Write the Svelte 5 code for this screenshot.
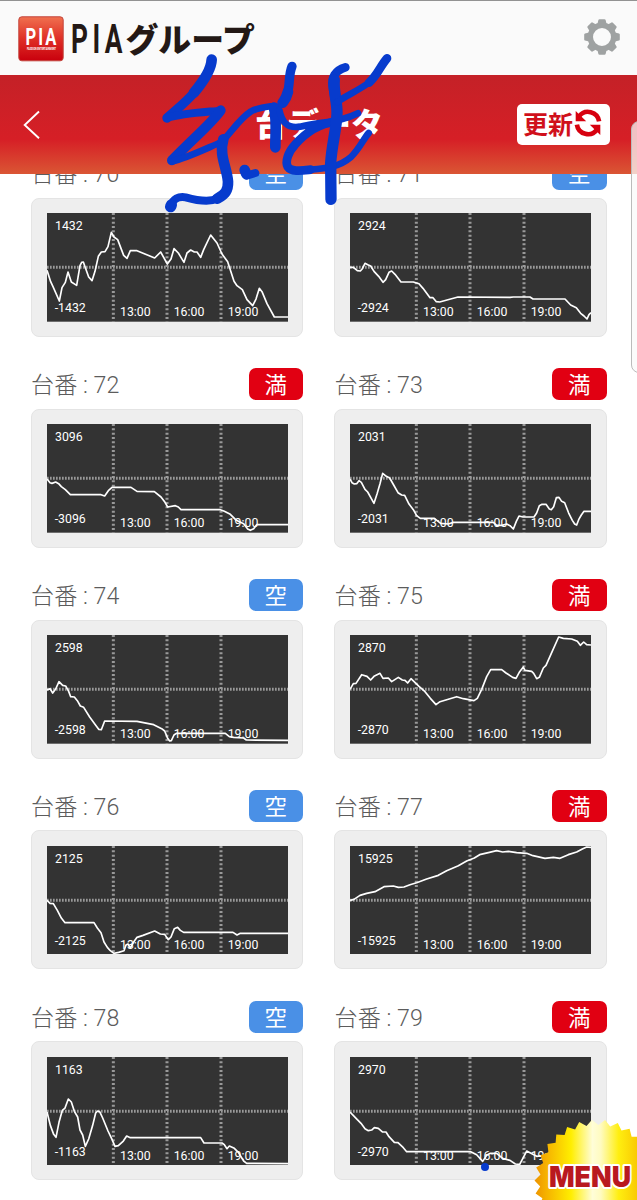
<script lang="ts">
  interface Machine {
    id: number;
    full: boolean;
    max: number;
    line: string;
  }

  // line points live in the 723 x 326 chart space
  const machines: Machine[] = [
    {
      id: 70,
      full: false,
      max: 1432,
      line: "0,172 11,206 18,221 37,264 45,224 55,208 63,177 73,207 89,217 99,158 104,148 109,147 125,192 135,203 144,175 154,130 163,117 174,116 183,101 193,58 201,72 212,80 230,127 240,136 250,113 270,113 323,135 341,117 361,153 372,138 381,107 394,120 411,148 420,120 431,111 442,117 450,117 461,133 470,110 491,66 510,90 525,123 542,146 561,205 570,218 586,230 600,260 617,278 627,258 637,226 645,236 660,272 682,312 723,312",
    },
    {
      id: 71,
      full: false,
      max: 2924,
      line: "0,163 10,163 22,173 31,174 37,167 45,151 55,156 62,159 72,175 86,190 99,208 107,200 117,178 125,174 135,184 153,207 190,207 207,212 219,226 240,254 249,254 259,266 269,267 324,252 480,253 490,252 540,252 549,258 645,258 662,276 679,284 692,301 702,309 711,318 717,305 723,299",
    },
    {
      id: 72,
      full: true,
      max: 3096,
      line: "0,165 9,176 15,178 26,174 35,179 43,188 55,197 70,212 162,212 173,216 184,200 195,190 252,190 270,202 322,203 342,219 354,235 362,249 385,245 394,249 402,257 520,257 532,262 550,271 568,289 590,299 602,315 610,319 620,314 629,302 723,302",
    },
    {
      id: 73,
      full: true,
      max: 2031,
      line: "0,165 6,176 13,180 20,179 27,170 34,175 45,196 53,204 72,238 81,210 90,179 98,148 109,157 119,162 131,183 144,206 155,213 164,214 177,240 190,257 200,275 211,283 253,283 272,298 295,300 310,295 430,295 440,304 456,304 470,300 480,305 490,315 499,292 507,276 519,279 552,279 560,267 568,245 576,241 588,241 598,255 604,257 611,248 619,221 627,220 635,232 644,236 656,267 667,289 674,300 680,303 686,287 694,273 702,262 723,262",
    },
    {
      id: 74,
      full: false,
      max: 2598,
      line: "0,165 9,161 17,174 26,162 36,140 47,151 56,153 65,169 71,185 82,186 91,197 100,213 110,217 128,246 145,269 155,283 163,284 173,258 270,259 320,269 344,281 353,288 362,310 368,318 373,317 381,300 388,295 535,295 547,305 560,307 590,309 598,315 723,316",
    },
    {
      id: 75,
      full: true,
      max: 2870,
      line: "0,163 10,146 18,145 35,119 51,124 62,135 72,124 90,115 99,130 115,129 125,140 145,127 157,135 165,136 173,144 183,131 207,154 225,170 241,190 258,209 270,200 320,185 340,191 372,197 382,190 395,163 410,125 422,104 455,104 468,114 488,127 498,130 509,110 520,96 525,106 545,109 551,115 560,131 568,127 580,99 588,91 605,53 626,6 640,10 665,12 682,19 691,31 701,21 710,29 723,30",
    },
    {
      id: 76,
      full: false,
      max: 2125,
      line: "0,163 9,172 19,173 31,193 43,216 54,230 141,230 151,246 162,260 171,288 181,304 190,314 201,322 215,319 231,314 237,297 243,294 250,306 260,288 270,274 288,268 323,255 340,264 353,265 364,281 372,273 382,248 392,244 400,253 410,259 558,259 570,267 580,262 723,262",
    },
    {
      id: 77,
      full: true,
      max: 15925,
      line: "0,163 12,160 30,148 50,142 75,137 102,122 130,120 145,124 162,123 180,116 200,110 230,99 265,88 290,74 325,59 350,45 373,36 389,26 415,20 440,14 458,18 475,16 500,20 530,22 549,29 585,37 610,34 630,37 655,26 680,18 697,9 710,3 723,4",
    },
    {
      id: 78,
      full: false,
      max: 1163,
      line: "0,165 10,205 20,232 27,241 36,196 46,160 54,153 64,126 73,135 82,163 92,180 99,219 107,234 115,268 125,246 137,205 146,168 152,162 158,164 167,183 183,222 194,245 204,268 214,266 229,252 239,237 250,242 461,242 471,258 525,258 532,263 540,275 547,267 562,274 574,286 590,312 599,319 723,320",
    },
    {
      id: 79,
      full: true,
      max: 2970,
      line: "0,165 22,188 33,199 45,215 55,221 65,219 73,212 85,214 98,225 108,225 117,239 133,256 144,257 160,272 170,284 362,284 380,293 398,313 410,295 421,289 440,289 458,304 480,310 496,321 509,322 519,303 530,282 560,298 590,294 620,310 723,310",
    },
  ];

  function burst(cx: number, cy: number, teeth: number): string {
    const pts: string[] = [];
    for (let i = 0; i < teeth * 2; i++) {
      const r = i % 2 ? 57 : 62.5;
      const a = (i * Math.PI) / teeth - Math.PI / 2 - 0.08;
      pts.push(`${(cx + r * Math.cos(a)).toFixed(1)},${(cy + r * Math.sin(a)).toFixed(1)}`);
    }
    return pts.join(" ");
  }

  const gearTeeth = [0, 45, 90, 135, 180, 225, 270, 315];
  const hours = [
    { x: 199, label: "13:00" },
    { x: 360, label: "16:00" },
    { x: 522, label: "19:00" },
  ];
</script>

<div class="screen">
  <header class="brand">
    <svg class="logo" viewBox="0 0 240 58" width="240" height="58">
      <defs>
        <linearGradient id="tile" x1="0" y1="0" x2="0" y2="1">
          <stop offset="0" stop-color="#f0704f" />
          <stop offset="0.5" stop-color="#df2f26" />
          <stop offset="1" stop-color="#c9000d" />
        </linearGradient>
      </defs>
      <rect x="0.8" y="0.8" width="44.4" height="44" rx="3" fill="url(#tile)" stroke="#c2453c" />
      <g class="pia" fill="#fff">
        <text x="7.5" y="28.5" font-size="24" letter-spacing="3" textLength="33" lengthAdjust="spacingAndGlyphs">PIA</text>
        <text x="9" y="33.8" font-size="3.4" textLength="29" lengthAdjust="spacingAndGlyphs">PASSION ENTERTAINMENT</text>
      </g>
      <text class="pia" x="53" y="37" font-size="41" letter-spacing="7" textLength="56" lengthAdjust="spacingAndGlyphs" fill="#231815">PIA</text>
      <text class="group" x="107.5" y="35.5" font-size="33" textLength="129.5" lengthAdjust="spacingAndGlyphs">グループ</text>
    </svg>
    <svg class="gear" viewBox="-18 -18 36 36" width="36" height="36">
      <circle r="11.7" fill="none" stroke="#9fa2a2" stroke-width="5.4" />
      {#each gearTeeth as a}
        <path d="M-4.6 -13 L-3.6 -17 Q-3.4 -17.8 -2.5 -17.8 H2.5 Q3.4 -17.8 3.6 -17 L4.6 -13 Z" fill="#9fa2a2" transform="rotate({a})" />
      {/each}
    </svg>
  </header>

  <nav class="titlebar">
    <svg class="back" viewBox="0 0 18 30" width="18" height="30">
      <path d="M16 1.5 L1.7 15 L16 28.3" fill="none" stroke="#fff" stroke-width="1.9" />
    </svg>
    <h1>台データ</h1>
    <button class="reload">
      <span>更新</span>
      <svg viewBox="-14 -14 28 28" width="28" height="28">
        <g fill="none" stroke="#d7000f" stroke-width="4.6">
          <path d="M-9 -6.6 A11.2 11.2 0 0 1 11.1 -1.6" />
          <path d="M9 6.6 A11.2 11.2 0 0 1 -11.1 1.6" />
        </g>
        <path d="M-12.3 -12 V-1.8 H-1.8 Z" fill="#d7000f" />
        <path d="M12.3 12 V1.8 H1.8 Z" fill="#d7000f" />
      </svg>
    </button>
  </nav>

  <main>
    <div class="grid">
      {#each machines as m}
        <section>
          <div class="head">
            <span class="number">台番 : {m.id}</span>
            <span class="state" class:full={m.full}>{m.full ? "満" : "空"}</span>
          </div>
          <div class="card">
            <svg class="chart" viewBox="0 0 723 326" preserveAspectRatio="none">
              <rect width="723" height="326" fill="#333" />
              <g stroke="#999" stroke-width="9" stroke-dasharray="6 7">
                <line x1="0" y1="163" x2="723" y2="163" stroke-dasharray="5 4" />
                {#each hours as h}
                  <line x1={h.x} y1="0" x2={h.x} y2="326" />
                {/each}
              </g>
              <text x="24" y="50">{m.max}</text>
              <text x="23" y="296">-{m.max}</text>
              {#each hours as h}
                <text x={h.x + 20} y="308">{h.label}</text>
              {/each}
              <polyline points={m.line} fill="none" stroke="#fff" stroke-width="5" stroke-linejoin="round" />
            </svg>
          </div>
        </section>
      {/each}
    </div>
  </main>

  <div class="edge-panel"></div>

  <svg class="menu" viewBox="0 0 107 84" width="107" height="84">
    <defs>
      <linearGradient id="gold" gradientUnits="userSpaceOnUse" x1="3" y1="60" x2="122" y2="60">
        <stop offset="0" stop-color="#ec8f00" />
        <stop offset="0.12" stop-color="#f6b400" />
        <stop offset="0.32" stop-color="#ffee00" />
        <stop offset="0.5" stop-color="#fffdd8" />
        <stop offset="0.57" stop-color="#fffbc0" />
        <stop offset="0.72" stop-color="#ffee10" />
        <stop offset="0.9" stop-color="#f8c400" />
      </linearGradient>
    </defs>
    <polygon points={burst(67, 66, 30)} fill="url(#gold)" />
    <text x="19" y="71.3" textLength="82" lengthAdjust="spacingAndGlyphs">MENU</text>
  </svg>

  <!-- handwritten marks over the title -->
  <svg class="ink" viewBox="0 0 750 495" width="250" height="165">
    <g fill="none" stroke="#073bcd" stroke-linecap="round" stroke-linejoin="round">
      <path stroke-width="32" d="M185 29 C184 60 157 98 132 128" />
      <path stroke-width="28" d="M132 128 C108 156 83 175 51 204" />
      <path stroke-width="24" d="M51 204 C95 190 160 187 212 182" />
      <path stroke-width="30" d="M212 181 C185 220 135 260 66 331" />
      <path stroke-width="20" d="M66 334 C110 325 180 290 215 276 C245 245 270 205 302 185 C325 172 345 171 370 168" />
      <path stroke-width="32" d="M220 268 C206 315 231 352 234 395 C235 422 225 433 202 446" />
      <path stroke-width="24" d="M202 446 C175 459 132 449 107 442 C85 438 69 448 64 466" />
      <path stroke-width="34" d="M62 470 L64 465" />
      <path stroke-width="28" d="M426 49 C415 74 421 105 411 134" />
      <path stroke-width="32" d="M414 125 C409 145 404 150 398 158" />
      <path stroke-width="32" d="M372 173 C381 210 376 250 376 292" />
      <path stroke-width="32" d="M284 360 L289 372" />
      <path stroke-width="24" d="M290 377 L316 369" />
      <path stroke-width="20" d="M388 180 C395 215 410 236 450 230 C520 215 575 215 624 190" />
      <path stroke-width="26" d="M555 216 C505 221 465 250 435 284 C415 305 405 335 413 350 C425 367 455 362 482 359" />
      <path stroke-width="20" d="M482 359 C530 355 570 350 602 322 C630 295 639 269 656 249" />
      <path stroke-width="26" d="M586 52 C555 61 544 83 548 110 C551 132 555 150 560 174" />
      <path stroke-width="34" d="M553 90 C549 120 562 155 561 190 C560 235 545 285 542 340 L543 448" />
      <path stroke-width="20" d="M562 156 C590 135 620 125 657 98" />
      <path stroke-width="26" d="M657 98 C682 76 691 48 711 25" />
    </g>
  </svg>
  <span class="ink-dot"></span>
</div>

<style>
  :global(body) {
    background: #fff;
  }

  .screen {
    position: relative;
    display: flex;
    flex-direction: column;
    width: 637px;
    height: 1200px;
    overflow: hidden;
    font-family: Roboto, "Noto Sans CJK JP", sans-serif;
  }

  .brand {
    display: flex;
    flex: none;
    justify-content: space-between;
    box-sizing: border-box;
    height: 75px;
    padding: 15px 17px 0 18px;
    background: #fafafa;
    border-top: 1px solid #929292;
  }

  .logo {
    overflow: visible;
  }

  .gear {
    margin-top: 3px;
  }

  .pia {
    font-family: Roboto, sans-serif;
    font-weight: 700;
  }

  .group {
    font-family: "Noto Sans CJK JP", sans-serif;
    font-weight: 900;
    fill: #231815;
  }

  .titlebar {
    display: grid;
    flex: none;
    grid-template-columns: 120px 1fr 120px;
    align-items: center;
    box-sizing: border-box;
    height: 99px;
    padding: 0 27px 0 23px;
    background: linear-gradient(#c42127, #d61f26 65%, #da5634);
    z-index: 1;
  }

  h1 {
    margin: 0;
    padding-left: 5px;
    font-size: 32px;
    line-height: 40px;
    font-weight: 900;
    text-align: center;
    color: #fff;
  }

  .reload {
    display: flex;
    justify-self: end;
    align-items: center;
    width: 93px;
    height: 41px;
    padding: 0 0 4px 6px;
    border: 0;
    border-radius: 5px;
    background: #fff;
    color: #d0101b;
    font: 700 25px/36px "Noto Sans CJK JP", sans-serif;
  }

  .reload svg {
    flex: none;
    margin-left: 1px;
  }

  main {
    flex: 1;
    min-height: 0;
    padding: 0 30.5px;
  }

  .grid {
    display: grid;
    grid-template-columns: 272.5px 272.5px;
    grid-auto-rows: 210.9px;
    column-gap: 31px;
    margin-top: -16.8px;
  }

  .head {
    display: flex;
    justify-content: space-between;
    align-items: center;
    height: 32.4px;
    margin-bottom: 8.2px;
  }

  .number {
    padding: 2px 0 0 0.5px;
    color: #5c5c5c;
    font-size: 23.2px;
    font-weight: 300;
    line-height: 32px;
  }

  .state {
    width: 54.3px;
    height: 32.4px;
    border-radius: 7px;
    background: #4a90e6;
    color: #fff;
    font-size: 22.5px;
    line-height: 34px;
    text-align: center;
  }

  .state.full {
    background: #e10012;
  }

  .card {
    box-sizing: border-box;
    height: 139px;
    padding: 14.3px 14px 14.3px 15.2px;
    border: 1px solid #e4e4e4;
    border-radius: 8px;
    background: #eee;
  }

  .chart {
    display: block;
    width: 241px;
    height: 108.7px;
  }

  .chart text {
    fill: #fff;
    font-size: 37px;
  }

  .edge-panel {
    position: absolute;
    top: 121px;
    left: 631px;
    box-sizing: border-box;
    width: 20px;
    height: 252px;
    border: 1px solid #bbb;
    border-radius: 8px;
    background: rgba(250, 250, 250, 0.75);
    z-index: 2;
  }

  .menu {
    position: absolute;
    right: 0;
    bottom: 0;
  }

  .menu text {
    fill: #b9191f;
    stroke: #fff;
    stroke-width: 4px;
    stroke-linejoin: round;
    paint-order: stroke;
    font-family: Inter, sans-serif;
    font-size: 29px;
    font-weight: 900;
  }

  .ink {
    position: absolute;
    top: 50px;
    left: 150px;
    z-index: 3;
  }

  .ink-dot {
    position: absolute;
    top: 1163px;
    left: 481px;
    width: 8px;
    height: 8px;
    border-radius: 50%;
    background: #073bcd;
  }
</style>
